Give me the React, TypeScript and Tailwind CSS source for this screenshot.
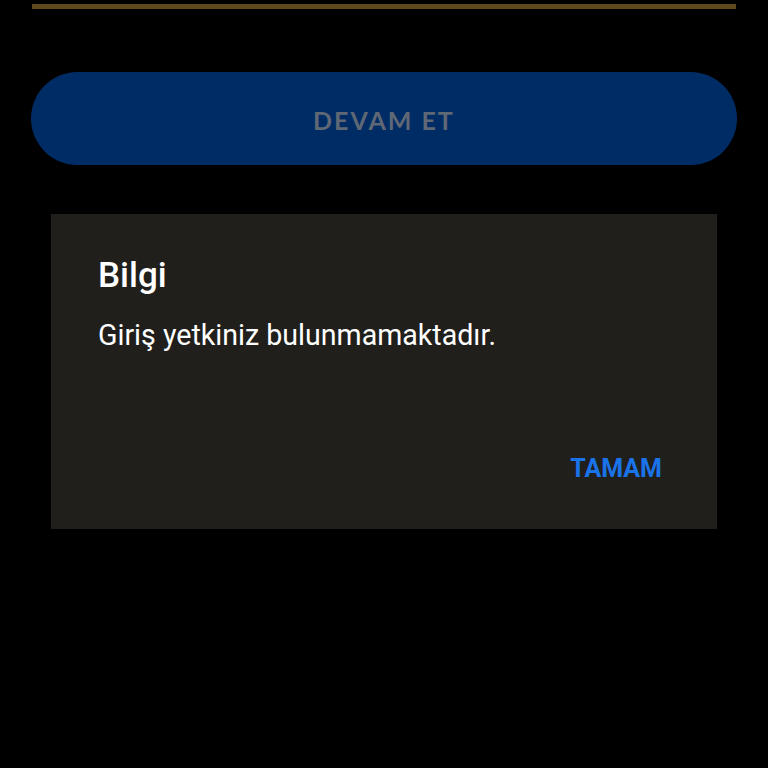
import React from "react";

export default function App() {
  return (
    <div
      className="h-[768px] w-[768px] bg-black flex flex-col overflow-hidden"
      style={{ fontFamily: "Roboto, 'Noto Sans', sans-serif" }}
    >
      {/* progress / divider line */}
      <div className="mx-[32px] mt-[4px] h-[5px] bg-[#5e4a1c]" />

      {/* primary action */}
      <button className="mx-[31px] mt-[63px] h-[93px] rounded-full bg-[#002c66] flex items-center justify-center">
        <span className="mt-[4px] text-[25px] font-bold tracking-[2px] text-[#5f6874] font-['Lato',sans-serif]">
          DEVAM ET
        </span>
      </button>

      {/* alert dialog */}
      <div className="mx-[51px] mt-[49px] h-[315px] bg-[#201f1c] flex flex-col px-[47px] pt-[40px]">
        <h2 className="text-[35px] leading-[44px] font-medium text-white">Bilgi</h2>
        <p className="mt-[19px] text-[28.6px] leading-[36px] text-white">
          Giriş yetkiniz bulunmamaktadır.
        </p>
        <div className="mt-auto mb-[42px] flex justify-end pr-[8px]">
          <span className="text-[25px] font-bold text-[#1a73e8]">TAMAM</span>
        </div>
      </div>
    </div>
  );
}
